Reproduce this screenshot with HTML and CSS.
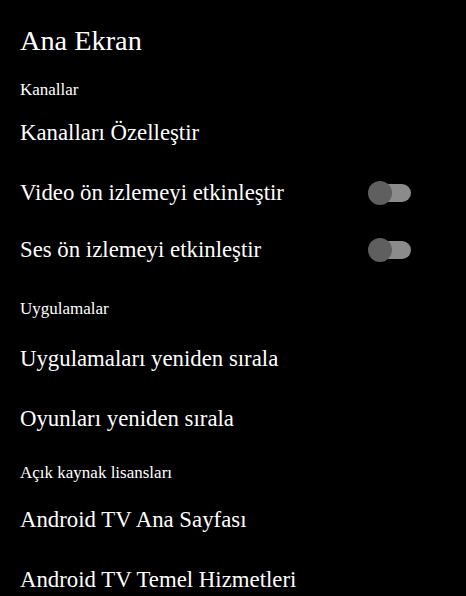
FILE: index.html
```html
<!DOCTYPE html>
<html lang="tr">
<head>
<meta charset="utf-8">
<link rel="stylesheet" href="styles.css">
</head>
<body>
<main class="screen">
  <h1 class="title">Ana Ekran</h1>
  <section class="group group-channels">
    <h2 class="group-head">Kanallar</h2>
    <div class="row">Kanalları Özelleştir</div>
    <div class="row row-toggle"><span>Video ön izlemeyi etkinleştir</span><span class="toggle"><span class="knob"></span></span></div>
    <div class="row row-toggle"><span>Ses ön izlemeyi etkinleştir</span><span class="toggle"><span class="knob"></span></span></div>
  </section>
  <section class="group group-apps">
    <h2 class="group-head">Uygulamalar</h2>
    <div class="row">Uygulamaları yeniden sırala</div>
    <div class="row">Oyunları yeniden sırala</div>
  </section>
  <section class="group group-licenses">
    <h2 class="group-head">Açık kaynak lisansları</h2>
    <div class="row">Android TV Ana Sayfası</div>
    <div class="row">Android TV Temel Hizmetleri</div>
  </section>
</main>
</body>
</html>
```

FILE: styles.css
```css
html, body {
  margin: 0;
  background: #000;
  color: #fff;
  font-family: "Liberation Serif", "Times New Roman", serif;
}
.screen {
  width: 466px;
  height: 596px;
  overflow: hidden;
  padding: 25px 20px 0 20px;
  box-sizing: border-box;
}
.title {
  margin: 0;
  font-size: 28.3px;
  font-weight: normal;
  line-height: 32px;
}
.group-head {
  margin: 0;
  font-size: 17px;
  font-weight: normal;
  line-height: 20px;
}
.group-channels .group-head { margin: 23px 0 3px; }
.group-apps .group-head { margin: 22px 0 10px; }
.group-licenses .group-head { margin: 14px 0 7px; }
.row {
  font-size: 22.8px;
  line-height: 26px;
  padding: 17px 0;
}
.row-toggle {
  display: flex;
  justify-content: space-between;
  align-items: center;
  padding: 17px 35px 14px 0;
}
.toggle {
  position: relative;
  width: 40px;
  height: 18px;
  border-radius: 9px;
  background: #8b8b8b;
}
.knob {
  position: absolute;
  left: -3px;
  top: -3px;
  width: 24px;
  height: 24px;
  border-radius: 50%;
  background: #5f5f5f;
}
```
